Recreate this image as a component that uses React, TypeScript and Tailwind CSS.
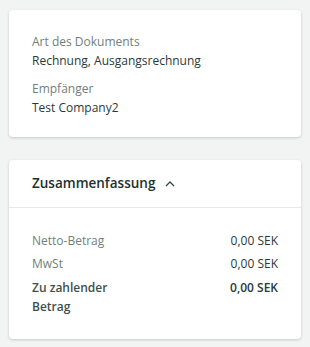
export default function App() {
  return (
    <div
      className="min-h-[347px] bg-[#f2f3f3] px-[9px] pt-[10px] pb-[9px] text-[12px] text-[#2b3a36]"
      style={{ fontFamily: '"Open Sans", "Noto Sans", sans-serif' }}
    >
      {/* Document info */}
      <section className="bg-white rounded-[4px] shadow-[0_1px_3px_rgba(0,0,0,0.18)] px-[23px] pt-[22px] pb-[20px]">
        <div className="leading-[19px]">
          <p className="text-[#6f7f7b]">Art des Dokuments</p>
          <p>Rechnung, Ausgangsrechnung</p>
        </div>
        <div className="mt-[9px] leading-[19px]">
          <p className="text-[#6f7f7b]">Empfänger</p>
          <p>Test Company2</p>
        </div>
      </section>

      {/* Summary */}
      <section className="mt-[23px] bg-white rounded-[4px] shadow-[0_1px_3px_rgba(0,0,0,0.18)]">
        <div className="flex items-center gap-[9px] px-[23px] h-[48px] border-b border-[#e6e9e8]">
          <h3 className="text-[13.5px] font-semibold text-[#22312e]">Zusammenfassung</h3>
          <svg width="12" height="12" viewBox="0 0 12 12" fill="none" stroke="#3a4845" strokeWidth="1.3">
            <path d="M2 8 L6 4 L10 8" />
          </svg>
        </div>
        <div className="px-[23px] pt-[21px] pb-[23px] leading-[23px]">
          <div className="flex justify-between">
            <span className="text-[#6f7f7b]">Netto-Betrag</span>
            <span>0,00 SEK</span>
          </div>
          <div className="flex justify-between">
            <span className="text-[#6f7f7b]">MwSt</span>
            <span>0,00 SEK</span>
          </div>
          <div className="flex justify-between font-semibold leading-[19px] mt-[3px]">
            <span className="w-[100px] text-[#3f504c]">Zu zahlender Betrag</span>
            <span>0,00 SEK</span>
          </div>
        </div>
      </section>
    </div>
  );
}
